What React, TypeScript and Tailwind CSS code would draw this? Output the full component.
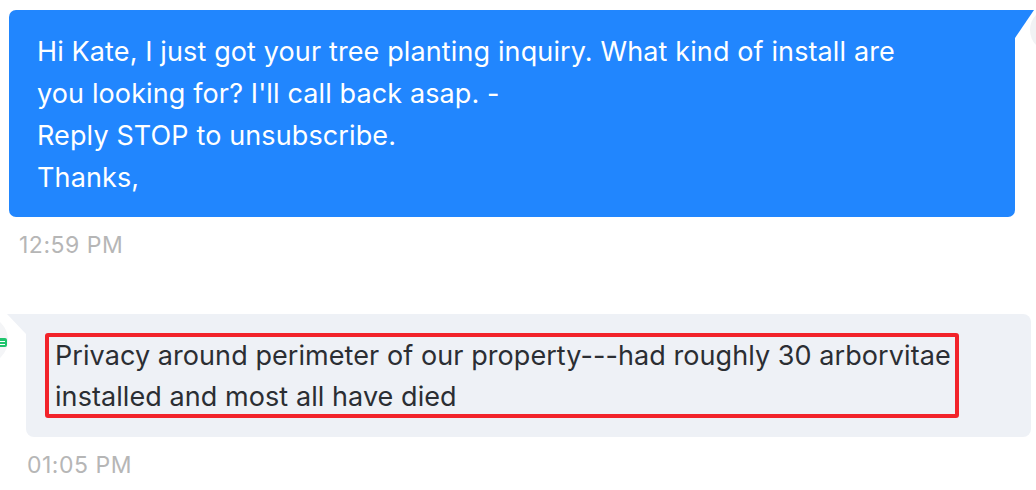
import React from "react";

const font = { fontFamily: "Inter, 'Noto Sans', sans-serif" };

const outgoing = [
	"Hi Kate, I just got your tree planting inquiry. What kind of install are",
	"you looking for? I'll call back asap. -",
	"Reply STOP to unsubscribe.",
	"Thanks,",
];

const incoming = [
	"Privacy around perimeter of our property---had roughly 30 arborvitae",
	"installed and most all have died",
];

const App = () => {
	return (
		<div
			style={font}
			className="relative w-[1036px] h-[490px] overflow-hidden bg-white"
		>
			{/* sender avatar peeking at the right edge */}
			<div className="absolute left-[1030px] top-[8px] w-[44px] h-[44px] rounded-full bg-[#f1f2f4]" />

			<div className="flex pt-[10px] pl-[9px]">
				<div className="w-[1006px] rounded-l-[7px] rounded-br-[7px] bg-[#2186fe] pl-[28px] pt-[21px] pb-[18px] text-[27px] leading-[42px] tracking-[0.12px] text-white">
					{outgoing.map((line) => (
						<div key={line}>{line}</div>
					))}
				</div>
				<svg width="20" height="28" viewBox="0 0 20 28" className="shrink-0">
					<path d="M0 0 H19 L0 28 Z" fill="#2186fe" />
				</svg>
			</div>
			<div className="pl-[19px] pt-[14px] text-[23px] leading-[28px] tracking-[0.5px] text-[#b6b6b6]">
				12:59 PM
			</div>

			<div className="relative mt-[55px] flex pl-[7px]">
				{/* contact avatar, mostly off-screen */}
				<div className="absolute left-[-40px] top-[2px] w-[48px] h-[48px] rounded-full bg-[#f4f5f7]" />
				<div className="absolute left-[-6px] top-[24px] flex h-[9px] w-[13px] flex-col items-end justify-center gap-[2px] rounded-[2px] bg-[#1fc46d] pr-[2px]">
					<span className="h-[1px] w-[6px] bg-white" />
					<span className="h-[1px] w-[6px] bg-white" />
				</div>
				<svg width="19" height="20" viewBox="0 0 19 20" className="relative shrink-0">
					<path d="M0 0 H19 V20 Z" fill="#eef1f6" />
				</svg>
				<div className="w-[1005px] rounded-r-[8px] rounded-bl-[8px] bg-[#eef1f6] pl-[19px] pt-[19px] pb-[19px]">
					<div className="h-[85px] w-[914px] rounded-[3px] border-[4px] border-[#f2232a] pl-[6px] text-[27px] leading-[41px] tracking-[0.07px] text-[#2b2e33]">
						<div className="-mt-[2px]">
							{incoming.map((line) => (
								<div key={line}>{line}</div>
							))}
						</div>
					</div>
				</div>
			</div>
			<div className="pl-[27px] pt-[14px] text-[23px] leading-[28px] tracking-[0.5px] text-[#b6b6b6]">
				01:05 PM
			</div>
		</div>
	);
};

export default App;
